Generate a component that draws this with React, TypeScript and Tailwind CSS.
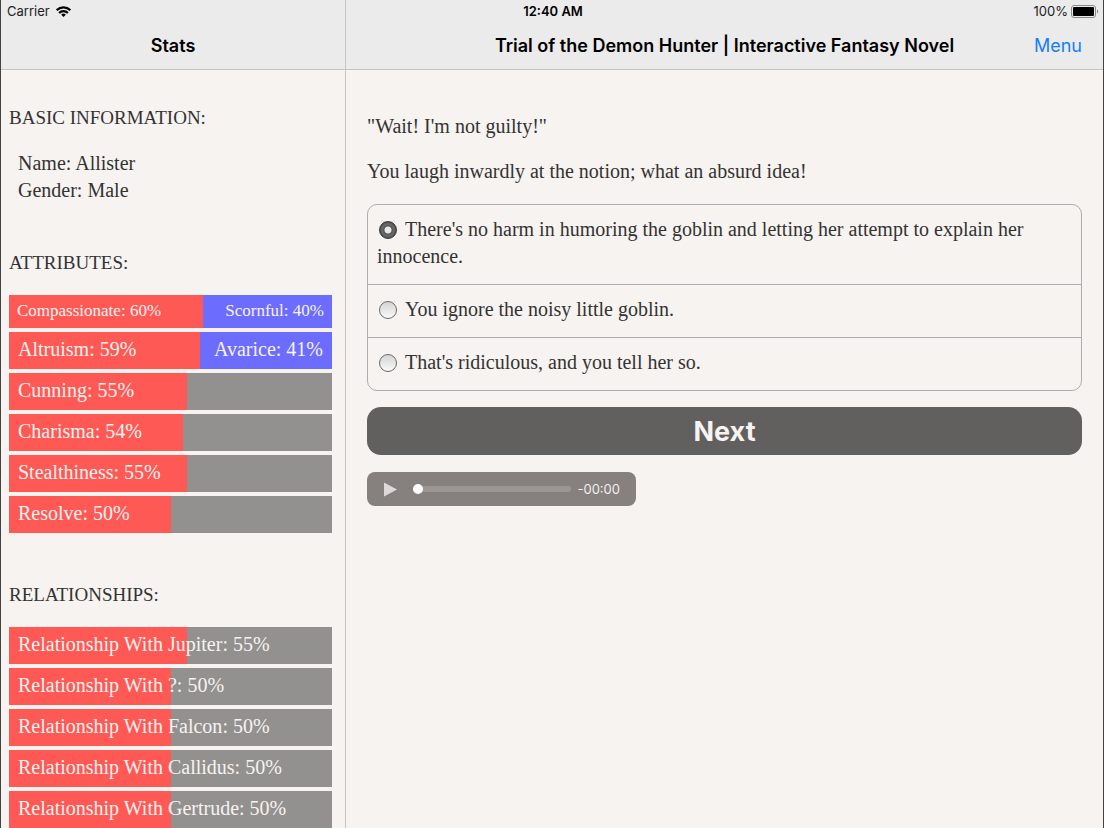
import { useState } from "react";

interface Stat {
  label: string;
  value: number;
  opposite?: string;
  small?: boolean;
}

const attributes: Stat[] = [
  { label: "Compassionate", value: 60, opposite: "Scornful", small: true },
  { label: "Altruism", value: 59, opposite: "Avarice" },
  { label: "Cunning", value: 55 },
  { label: "Charisma", value: 54 },
  { label: "Stealthiness", value: 55 },
  { label: "Resolve", value: 50 },
];

const relationships: Stat[] = [
  { label: "Relationship With Jupiter", value: 55 },
  { label: "Relationship With ?", value: 50 },
  { label: "Relationship With Falcon", value: 50 },
  { label: "Relationship With Callidus", value: 50 },
  { label: "Relationship With Gertrude", value: 50 },
];

const choices = [
  "There's no harm in humoring the goblin and letting her attempt to explain her innocence.",
  "You ignore the noisy little goblin.",
  "That's ridiculous, and you tell her so.",
];

function StatBar({ stat }: { stat: Stat }) {
  return (
    <div
      className={`relative text-[#f7f3f0] ${stat.opposite ? "bg-[#6c6cff]" : "bg-[#92918f]"} ${
        stat.small ? "h-[33px] px-2 text-[17px] leading-[31px]" : "h-[37px] px-[9px] text-[20px] leading-[34px]"
      }`}
    >
      <div className="absolute inset-y-0 left-0 bg-[#ff5955]" style={{ width: `${stat.value}%` }} />
      <div className="relative flex justify-between whitespace-nowrap">
        <span>
          {stat.label}: {stat.value}%
        </span>
        {stat.opposite && (
          <span>
            {stat.opposite}: {100 - stat.value}%
          </span>
        )}
      </div>
    </div>
  );
}

function StatusBar() {
  return (
    <div className="grid h-[22px] grid-cols-[1fr_auto_1fr] items-center pr-1 pl-[6px] text-[13px] leading-[20px] text-[#222]">
      <div className="flex items-center gap-[6px]">
        <span>Carrier</span>
        <svg width="15" height="11" viewBox="0 0 15 11" fill="none" stroke="#000" strokeWidth="2.2">
          <path d="M0.7 4.1a9.6 9.6 0 0 1 13.6 0" />
          <path d="M3.1 6.9a6.2 6.2 0 0 1 8.8 0" />
          <path d="M7.5 11 5.2 8.7a3.2 3.2 0 0 1 4.6 0z" fill="#000" stroke="none" />
        </svg>
      </div>
      <span className="text-center font-semibold text-black">12:40 AM</span>
      <div className="flex items-center justify-end gap-[3px]">
        <span>100%</span>
        <svg width="28" height="13" viewBox="0 0 28 13">
          <rect x="0.5" y="0.5" width="24" height="12" rx="2.5" fill="none" stroke="#8a8a8b" />
          <rect x="2" y="2" width="21" height="9" rx="1" fill="#000" />
          <path d="M26 4.5c1.6.6 1.6 3.4 0 4z" fill="#8a8a8b" />
        </svg>
      </div>
    </div>
  );
}

export default function App() {
  const [choice, setChoice] = useState(0);
  const [position, setPosition] = useState(0);

  return (
    <div className="relative flex h-screen overflow-hidden border-x border-[#444] bg-[#f7f3f0] font-['Liberation_Serif',serif] text-[20px] leading-[27px] text-[#333]">
      {/* the status bar floats over both pane headers */}
      <div className="absolute inset-x-0 top-0 z-10 font-[Inter,sans-serif]">
        <StatusBar />
      </div>

      {/* Stats */}
      <aside className="flex w-[345px] shrink-0 flex-col border-r border-[#c8c6c5]">
        <header className="flex h-[70px] shrink-0 items-end justify-center border-b border-[#c5c3c3] bg-[#ebebec] pb-[10px] font-[Inter,sans-serif]">
          <h1 className="text-[18px] font-semibold text-black">Stats</h1>
        </header>
        <div className="min-h-0 flex-1 overflow-hidden pt-[34px] pr-[13px] pl-2">
          <section className="mb-[45px]">
            <h2 className="mb-[19px] text-[19px]">BASIC INFORMATION:</h2>
            <div className="px-[9px]">
              <p>Name: Allister</p>
              <p>Gender: Male</p>
            </div>
          </section>
          <section className="mb-12">
            <h2 className="mb-[19px] text-[19px]">ATTRIBUTES:</h2>
            <div className="flex flex-col gap-1">
              {attributes.map((s) => (
                <StatBar key={s.label} stat={s} />
              ))}
            </div>
          </section>
          <section>
            <h2 className="mb-[19px] text-[19px]">RELATIONSHIPS:</h2>
            <div className="flex flex-col gap-1">
              {relationships.map((s) => (
                <StatBar key={s.label} stat={s} />
              ))}
            </div>
          </section>
        </div>
      </aside>

      {/* Story */}
      <main className="flex min-w-0 flex-1 flex-col">
        <header className="grid h-[70px] shrink-0 grid-cols-[1fr_auto_1fr] items-end border-b border-[#c5c3c3] bg-[#ebebec] px-[21px] pb-[10px] font-[Inter,sans-serif] text-[18px]">
          <h1 className="col-start-2 font-semibold whitespace-nowrap text-black">
            Trial of the Demon Hunter | Interactive Fantasy Novel
          </h1>
          <button className="justify-self-end text-[#147efb]">Menu</button>
        </header>

        <div className="px-[21px] pt-[43px]">
          <p className="mb-[18px]">"Wait! I'm not guilty!"</p>
          <p className="mb-[19px]">You laugh inwardly at the notion; what an absurd idea!</p>

          <form onSubmit={(e) => e.preventDefault()}>
            <div className="divide-y divide-[#abaeaf] rounded-[10px] border border-[#abaeaf]">
              {choices.map((text, i) => (
                <label key={text} className="block px-[9px] pt-[11px] pb-[14px]">
                  <input
                    type="radio"
                    name="choice"
                    checked={choice === i}
                    onChange={() => setChoice(i)}
                    className="mr-2 ml-[2px] size-[18px] appearance-none rounded-full border border-[#6b6b6b] bg-linear-to-b from-[#d4d4d4] to-[#fafafa] align-[-3px] checked:border-[#3a3a3a] checked:bg-[radial-gradient(circle,#e8e8e8_0_3px,#555_4px,#6b6b6b_6px,#3c3c3c_9px)]"
                  />
                  {text}
                </label>
              ))}
            </div>
            <button
              type="submit"
              className="mt-4 block h-12 w-full rounded-[14px] bg-[#62605e] font-[Inter,sans-serif] text-[27px] font-bold text-[#f7f3f0]"
            >
              Next
            </button>
          </form>

          {/* Audio player */}
          <div className="mt-[17px] flex h-[34px] w-[269px] items-center rounded-lg bg-[#86817e] pr-4 pl-[17px] font-[Inter,sans-serif] text-[13px] text-[#f1eeec]">
            <button aria-label="Play" className="mr-4">
              <svg width="13" height="15" viewBox="0 0 13 15" fill="#dddbda">
                <path d="M0 0.5 13 7.5 0 14.5z" />
              </svg>
            </button>
            <input
              type="range"
              aria-label="Position"
              min={0}
              max={100}
              value={position}
              onChange={(e) => setPosition(Number(e.target.value))}
              className="mr-[6px] h-[6px] min-w-0 flex-1 appearance-none rounded-full bg-[#9d9794] [&::-webkit-slider-thumb]:size-[10px] [&::-webkit-slider-thumb]:appearance-none [&::-webkit-slider-thumb]:rounded-full [&::-webkit-slider-thumb]:bg-white"
            />
            <span>-00:00</span>
          </div>
        </div>
      </main>
    </div>
  );
}
